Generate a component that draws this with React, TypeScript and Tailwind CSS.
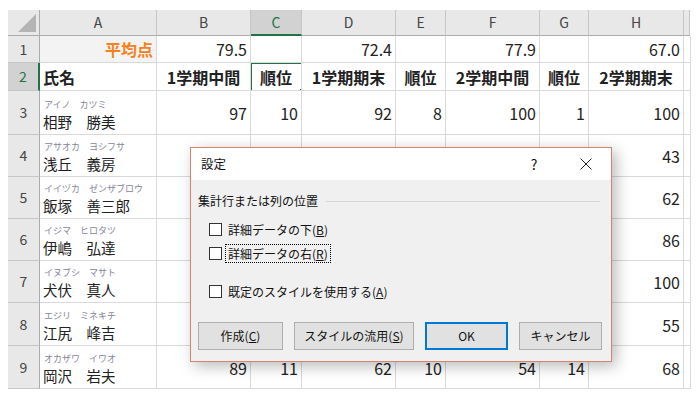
import React from "react";

type Row = {
  num: number;
  h: string;
  furi?: string;
  name?: string;
  vals: string[];
};

const COL_LETTERS = ["A", "B", "C", "D", "E", "F", "G", "H", ""];

const HEADS = ["1学期中間", "順位", "1学期期末", "順位", "2学期中間", "順位", "2学期期末"];

const AVG = ["79.5", "", "72.4", "", "77.9", "", "67.0"];

const PEOPLE: Row[] = [
  { num: 3, h: "h-[44px]", furi: "アイノ　カツミ", name: "相野　勝美", vals: ["97", "10", "92", "8", "100", "1", "100"] },
  { num: 4, h: "h-[42px]", furi: "アサオカ　ヨシフサ", name: "浅丘　義房", vals: ["", "", "", "", "", "", "43"] },
  { num: 5, h: "h-[42px]", furi: "イイヅカ　ゼンザブロウ", name: "飯塚　善三郎", vals: ["", "", "", "", "", "", "62"] },
  { num: 6, h: "h-[42px]", furi: "イジマ　ヒロタツ", name: "伊嶋　弘達", vals: ["", "", "", "", "", "", "86"] },
  { num: 7, h: "h-[42px]", furi: "イヌブシ　マサト", name: "犬伏　真人", vals: ["", "", "", "", "", "", "100"] },
  { num: 8, h: "h-[43px]", furi: "エジリ　ミネキチ", name: "江尻　峰吉", vals: ["", "", "", "", "", "", "55"] },
  { num: 9, h: "h-[43px]", furi: "オカザワ　イワオ", name: "岡沢　岩夫", vals: ["89", "11", "62", "10", "54", "14", "68"] },
];

const COLS = "grid grid-cols-[32px_117px_94px_51px_94px_50px_94px_49px_95px_6px]";

function RowHead({ n, selected }: { n: number; selected?: boolean }) {
  return (
    <div
      className={
        "flex items-center justify-center text-[14px] border-b border-[#c6c6c6] " +
        (selected
          ? "bg-[#d2d2d2] text-[#217346] border-r-2 border-r-[#217346]"
          : "bg-[#e8e8e8] text-[#444] border-r border-r-[#ababab]")
      }
    >
      {n}
    </div>
  );
}

function Cell({ children, className = "" }: { children?: React.ReactNode; className?: string }) {
  return (
    <div className={"border-r border-b border-[#d9d9d9] flex px-[3px] overflow-hidden whitespace-nowrap " + className}>
      {children}
    </div>
  );
}

function Checkbox({ label, mn, focus }: { label: string; mn: string; focus?: boolean }) {
  return (
    <div className="flex items-center h-[20px] pl-[11px]">
      <div className="w-[13px] h-[13px] border border-[#333] bg-white" />
      <div className={"ml-[3px] px-[2px] leading-[17px] " + (focus ? "border border-dotted border-black" : "border border-transparent")}>
        {label}(<u>{mn}</u>)
      </div>
    </div>
  );
}

function Button({ children, w, primary }: { children: React.ReactNode; w: string; primary?: boolean }) {
  return (
    <div
      className={
        "h-[28px] flex items-center justify-center bg-[#e1e1e1] " +
        w +
        (primary ? " border-2 border-[#0078d7]" : " border border-[#adadad]")
      }
    >
      {children}
    </div>
  );
}

export default function App() {
  return (
    <div
      className="relative w-[698px] h-[397px] bg-white overflow-hidden text-[#222]"
      style={{ fontFamily: '"Noto Sans CJK JP", "Liberation Sans", sans-serif' }}
    >
      <div className="pt-[10px] pl-[8px]">
        {/* column headers */}
        <div className={COLS + " h-[26px]"}>
          <div className="relative bg-[#e8e8e8] border-r border-b border-[#ababab]">
            <div className="absolute right-[3px] bottom-[3px] w-0 h-0 border-l-[18px] border-l-transparent border-b-[18px] border-b-[#b4b4b4]" />
          </div>
          {COL_LETTERS.map((c, i) =>
            c === "C" ? (
              <div key={i} className="flex items-center justify-center text-[14px] bg-[#d2d2d2] text-[#217346] border-r border-[#c6c6c6] border-b-2 border-b-[#217346]">
                {c}
              </div>
            ) : (
              <div key={i} className="flex items-center justify-center text-[14px] bg-[#e8e8e8] text-[#444] border-r border-[#c6c6c6] border-b border-b-[#ababab]">
                {c}
              </div>
            )
          )}
        </div>

        {/* row 1 */}
        <div className={COLS + " h-[27px]"}>
          <RowHead n={1} />
          <Cell className="justify-end items-end pb-[1px] bg-[#f3f3f3]">
            <span className="font-bold text-[16px] text-[#f58220]">平均点</span>
          </Cell>
          {AVG.map((v, i) => (
            <Cell key={i} className="justify-end items-end pb-[1px] text-[16px]">
              {v}
            </Cell>
          ))}
          <Cell />
        </div>

        {/* row 2 */}
        <div className={COLS + " h-[28px]"}>
          <RowHead n={2} selected />
          <Cell className="items-end pb-[1px] font-bold text-[16px]">氏名</Cell>
          {HEADS.map((v, i) => (
            <Cell key={i} className="relative justify-center items-end pb-[1px] font-bold text-[16px]">
              {v}
              {i === 1 && (
                <>
                  <div className="absolute -left-[1px] -top-[1px] w-[53px] h-[30px] border-2 border-[#217346]" />
                  <div className="absolute -right-[4px] -bottom-[4px] w-[6px] h-[6px] bg-[#217346] border border-white" />
                </>
              )}
            </Cell>
          ))}
          <Cell />
        </div>

        {/* rows 3-9 */}
        {PEOPLE.map((p) => (
          <div key={p.num} className={COLS + " " + p.h}>
            <RowHead n={p.num} />
            <Cell className="flex-col justify-end pb-[2px]">
              <div className="text-[9px] leading-[12px] text-[#85859a] pl-[1px]">{p.furi}</div>
              <div className="text-[14.5px] leading-[21px]">{p.name}</div>
            </Cell>
            {p.vals.map((v, i) => (
              <Cell key={i} className="justify-end items-center text-[16px] pt-[1px]">
                {v}
              </Cell>
            ))}
            <Cell />
          </div>
        ))}
      </div>

      {/* dialog */}
      <div className="absolute left-[190px] top-[147px] w-[422px] h-[215px] border border-[#d9826e] bg-[#f0f0f0] shadow-[4px_4px_14px_rgba(0,0,0,0.28)] text-[12px] text-[#111] flex flex-col">
        <div className="h-[32px] bg-white flex items-center shrink-0">
          <div className="pl-[10px] flex-1 text-[12.5px]">設定</div>
          <div className="w-[52px] flex justify-center text-[14px]">?</div>
          <div className="w-[51px] flex justify-center">
            <svg width="12" height="12" viewBox="0 0 12 12">
              <path d="M0.5 0.5 L11.5 11.5 M11.5 0.5 L0.5 11.5" stroke="#222" strokeWidth="1" />
            </svg>
          </div>
        </div>
        <div className="flex-1 flex flex-col px-[7px] pt-[12px]">
          <div className="flex items-center h-[18px]">
            <span>集計行または列の位置</span>
            <div className="flex-1 h-px bg-[#d5d5d5] ml-[8px] mr-[4px]" />
          </div>
          <div className="mt-[9px]">
            <Checkbox label="詳細データの下" mn="B" />
          </div>
          <div className="mt-[4px]">
            <Checkbox label="詳細データの右" mn="R" focus />
          </div>
          <div className="mt-[18px]">
            <Checkbox label="既定のスタイルを使用する" mn="A" />
          </div>
          <div className="mt-[21px] flex justify-between pr-[2px]">
            <Button w="w-[85px]">
              作成(<u>C</u>)
            </Button>
            <Button w="w-[120px]">
              スタイルの流用(<u>S</u>)
            </Button>
            <Button w="w-[83px]" primary>
              OK
            </Button>
            <Button w="w-[83px]">キャンセル</Button>
          </div>
        </div>
      </div>
    </div>
  );
}
